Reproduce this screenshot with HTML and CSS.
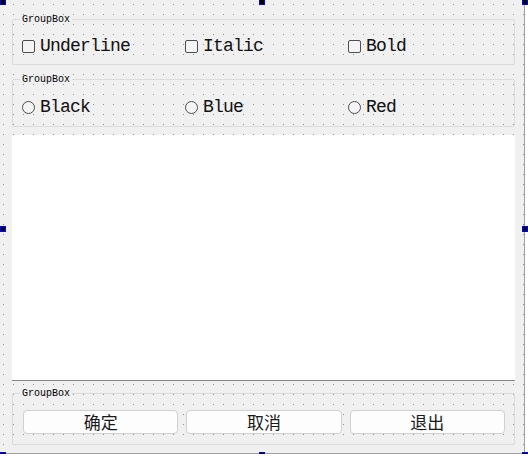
FILE: index.html
```html
<!DOCTYPE html>
<html>
<head>
<meta charset="utf-8">
<link rel="stylesheet" href="styles.css">
</head>
<body>
<div class="form">
  <fieldset class="group g1">
    <legend>GroupBox</legend>
    <div class="row">
      <label class="opt"><span class="check"></span>Underline</label>
      <label class="opt"><span class="check"></span>Italic</label>
      <label class="opt"><span class="check"></span>Bold</label>
    </div>
  </fieldset>
  <fieldset class="group g2">
    <legend>GroupBox</legend>
    <div class="row">
      <label class="opt"><span class="radio"></span>Black</label>
      <label class="opt"><span class="radio"></span>Blue</label>
      <label class="opt"><span class="radio"></span>Red</label>
    </div>
  </fieldset>
  <div class="edit"></div>
  <fieldset class="group g3">
    <legend>GroupBox</legend>
    <div class="buttons">
      <button class="btn">确定</button>
      <button class="btn">取消</button>
      <button class="btn">退出</button>
    </div>
  </fieldset>
  <span class="handle h-tl"></span>
  <span class="handle h-tm"></span>
  <span class="handle h-tr"></span>
  <span class="handle h-ml"></span>
  <span class="handle h-mr"></span>
  <span class="handle h-bl"></span>
  <span class="handle h-bm"></span>
  <span class="handle h-br"></span>
</div>
</body>
</html>
```

FILE: styles.css
```css
html, body {
  margin: 0;
  padding: 0;
  background: #ffffff;
}

.form {
  position: relative;
  box-sizing: border-box;
  width: 525px;
  height: 454px;
  padding: 13px 9px 0 12px;
  background-color: #f0f0f0;
  background-image: conic-gradient(from 270deg at 1px 1px, #8e8e8e 25%, transparent 0);
  background-size: 10px 10px;
  background-position: 3px 4px;
  border-right: 1px solid #a0a0a0;
  border-bottom: 1px solid #a0a0a0;
  font-family: "Liberation Mono", monospace;
  color: #000;
}

.group {
  margin: 0;
  border: 1px solid #dadada;
  border-radius: 2px;
  min-inline-size: 0;
  width: 503px;
  box-sizing: border-box;
}

.group legend {
  padding: 0 2px;
  margin-left: 0;
  font-family: "Liberation Mono", monospace;
  font-size: 10px;
  line-height: 13px;
  height: 13px;
}

.g1 {
  padding: 10px 9px 8px 7px;
}

.g1 .row, .g2 .row {
  margin-left: 2px;
}

.g2 {
  margin-top: 8px;
  padding: 11px 9px 9px 7px;
}

.row {
  display: grid;
  grid-template-columns: 163px 163px 150px;
  height: 20px;
}

.opt {
  display: flex;
  align-items: center;
  gap: 5px;
  font-size: 18px;
  letter-spacing: -0.8px;
  line-height: 20px;
  height: 20px;
  color: #111;
}

.check {
  box-sizing: border-box;
  width: 13px;
  height: 13px;
  border: 1px solid #4d4d4d;
  border-radius: 2px;
  background: #f4f4f4;
  flex: none;
}

.radio {
  box-sizing: border-box;
  width: 13px;
  height: 13px;
  border: 1px solid #4d4d4d;
  border-radius: 50%;
  background: #f4f4f4;
  flex: none;
}

.edit {
  box-sizing: border-box;
  margin-top: 8px;
  width: 503px;
  height: 246px;
  background: #ffffff;
  border-bottom: 1px solid #868686;
}

.g3 {
  margin-top: 6px;
  padding: 10px 9px 10px 7px;
}

.buttons {
  display: grid;
  grid-template-columns: repeat(3, 1fr);
  column-gap: 8px;
  margin-left: 3px;
}

.btn {
  box-sizing: border-box;
  height: 24px;
  margin: 0;
  padding: 0;
  background: #fdfdfd;
  border: 1px solid #d0d0d0;
  border-radius: 4px;
  font-family: "Noto Sans CJK SC", sans-serif;
  font-size: 17px;
  line-height: 22px;
  color: #1a1a1a;
}

.handle {
  position: absolute;
  box-sizing: border-box;
  width: 6px;
  height: 6px;
  background: #000;
  border: 1px solid #0000ff;
}

.h-tl { left: 0; top: -1px; }
.h-tm { left: 259px; top: -1px; }
.h-tr { left: 522px; top: -1px; }
.h-ml { left: 0; top: 226px; }
.h-mr { left: 522px; top: 226px; }
.h-bl { left: 0; top: 452px; }
.h-bm { left: 259px; top: 452px; }
.h-br { left: 522px; top: 452px; }
```
